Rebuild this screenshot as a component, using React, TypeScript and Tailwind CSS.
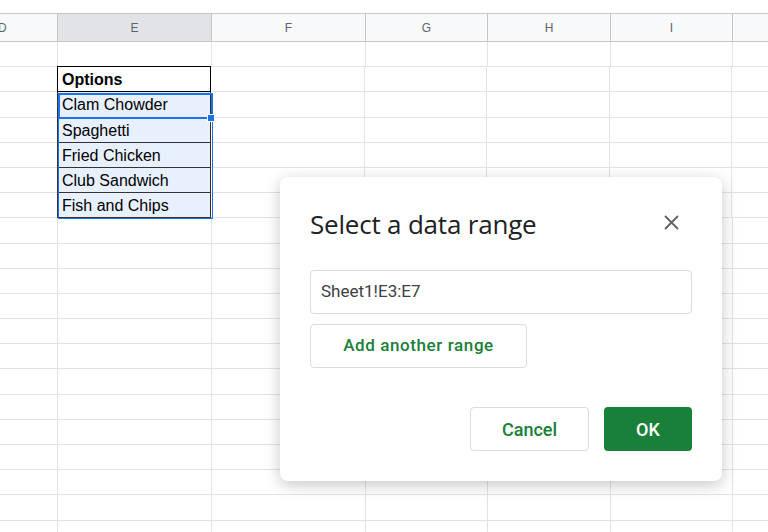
import React from "react";

const cols = [58, 154, 154, 122, 123, 122, 60];
const heads = ["D", "E", "F", "G", "H", "I", ""];
const items = ["Options", "Clam Chowder", "Spaghetti", "Fried Chicken", "Club Sandwich", "Fish and Chips"];

export default function App() {
  const rows = Array.from({ length: 20 }, (_, i) => i);
  return (
    <div className="relative w-[768px] h-[532px] overflow-hidden bg-white" style={{ fontFamily: "Arial, 'Liberation Sans', sans-serif" }}>
      <div className="h-[13px] bg-white" />
      <div className="flex h-[29px] bg-[#f8f9fa] border-t border-b border-[#c4c7c5] text-[12px] text-[#5f6368]">
        {cols.map((w, i) => (
          <div key={i} style={{ width: w }} className={`shrink-0 flex items-center justify-center border-r border-[#c4c7c5] ${i === 1 ? "bg-[#e1e3e6]" : ""}`}>
            {i === 0 ? <span className="w-full text-left -ml-1">D</span> : heads[i]}
          </div>
        ))}
      </div>
      {rows.map((r) => (
        <div key={r} className="flex h-[25.2px]">
          {cols.map((w, i) => {
            const idx = r - 1;
            const isData = i === 1 && idx >= 0 && idx < items.length;
            return (
              <div key={i} style={{ width: w }} className={`shrink-0 border-r border-b ${isData ? (idx === 0 ? "border-l border-t border-black -ml-px -mt-px font-bold" : "border-l border-[#333] -ml-px bg-[#e8f0fe]") : "border-[#e2e3e3]"} text-[16px] text-black leading-[25px] pl-[4px]`}>
                {isData ? items[idx] : ""}
              </div>
            );
          })}
        </div>
      ))}
      {/* selection outline */}
      <div className="absolute left-[58px] top-[93px] w-[155px] h-[126px] border border-[#1a73e8] pointer-events-none" />
      <div className="absolute left-[58px] top-[93px] w-[155px] h-[26px] border-2 border-[#1a73e8] pointer-events-none" />
      <div className="absolute left-[207px] top-[114px] w-[8px] h-[8px] bg-[#1a73e8] border border-white" />

      {/* cursor */}
      <svg className="absolute left-[296px] top-[427px]" width="12" height="19" viewBox="0 0 12 19">
        <path d="M1 1 L1 15 L4.5 11.5 L7 17.5 L9 16.5 L6.5 10.8 L11 10.8 Z" fill="white" stroke="#333" strokeWidth="1" />
      </svg>

      {/* dialog */}
      <div className="absolute left-[280px] top-[177px] w-[442px] h-[304px] bg-white rounded-[8px] shadow-[0_4px_16px_rgba(0,0,0,0.22)] px-[30px] pt-[30px]" style={{ fontFamily: "'Open Sans', Roboto, sans-serif" }}>
        <div className="flex items-start justify-between">
          <div className="text-[26px] text-[#202124] leading-[34px] tracking-[-0.2px]">Select a data range</div>
          <svg className="mt-[8px] mr-[13px]" width="15" height="15" viewBox="0 0 15 15"><path d="M1 1L14 14M14 1L1 14" stroke="#5f6368" strokeWidth="1.8" /></svg>
        </div>
        <div className="mt-[29px] h-[44px] w-[382px] border border-[#dadce0] rounded-[4px] flex items-center px-[10px] text-[17px] text-[#3c4043]" style={{ fontFamily: "Roboto, sans-serif" }}>Sheet1!E3:E7</div>
        <div className="mt-[10px] h-[44px] w-[217px] border border-[#dadce0] rounded-[4px] flex items-center justify-center text-[17px] font-medium text-[#188038] tracking-[0.6px]" style={{ fontFamily: "Roboto, sans-serif" }}>Add another range</div>
        <div className="mt-[39px] flex justify-end gap-[15px]" style={{ fontFamily: "Roboto, sans-serif" }}>
          <div className="h-[44px] w-[119px] border border-[#dadce0] rounded-[4px] flex items-center justify-center text-[18px] font-medium text-[#188038]">Cancel</div>
          <div className="h-[44px] w-[88px] bg-[#188038] rounded-[4px] flex items-center justify-center text-[18px] font-medium text-white">OK</div>
        </div>
      </div>
    </div>
  );
}
